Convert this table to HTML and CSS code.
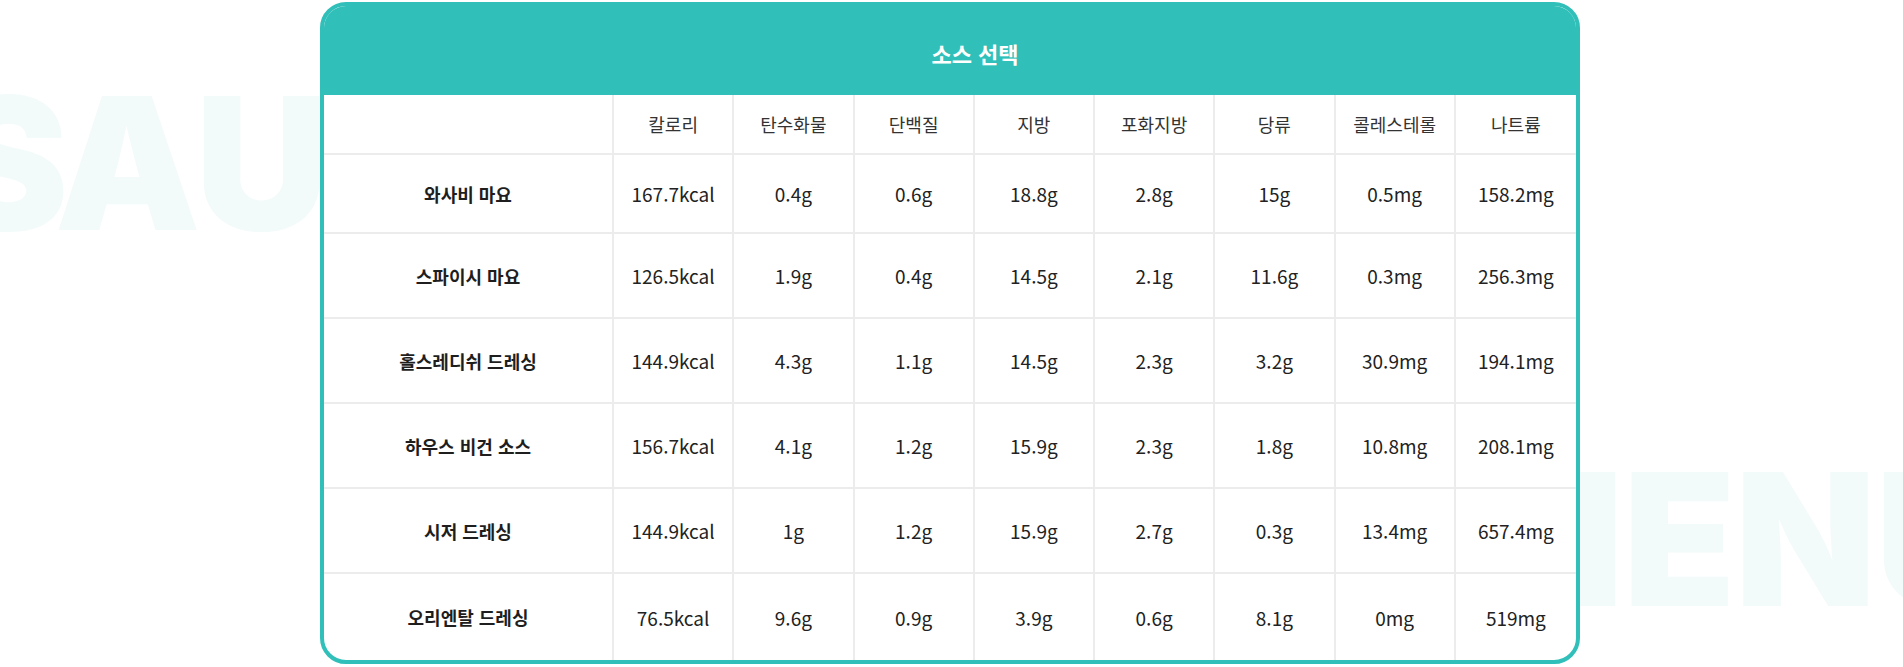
FILE: index.html
```html
<!DOCTYPE html>
<html lang="ko">
<head>
<meta charset="utf-8">
<title>소스 선택</title>
<link rel="stylesheet" href="styles.css">
</head>
<body>
<div class="page">
  <div class="bg-word bg-sauce"><span class="bg-first">S</span>AUCE</div>
  <div class="bg-word bg-menu">MENU</div>
  <section class="card">
    <h2 class="card-title">소스 선택</h2>
    <table class="nutri">
      <colgroup>
        <col class="col-name">
        <col><col><col><col><col><col><col><col>
      </colgroup>
      <thead>
        <tr>
          <th></th>
          <th>칼로리</th><th>탄수화물</th><th>단백질</th><th>지방</th><th>포화지방</th><th>당류</th><th>콜레스테롤</th><th>나트륨</th>
        </tr>
      </thead>
      <tbody>
        <tr class="r-first">
          <td class="name">와사비 마요</td>
          <td>167.7kcal</td><td>0.4g</td><td>0.6g</td><td>18.8g</td><td>2.8g</td><td>15g</td><td>0.5mg</td><td>158.2mg</td>
        </tr>
        <tr>
          <td class="name">스파이시 마요</td>
          <td>126.5kcal</td><td>1.9g</td><td>0.4g</td><td>14.5g</td><td>2.1g</td><td>11.6g</td><td>0.3mg</td><td>256.3mg</td>
        </tr>
        <tr>
          <td class="name">홀스레디쉬 드레싱</td>
          <td>144.9kcal</td><td>4.3g</td><td>1.1g</td><td>14.5g</td><td>2.3g</td><td>3.2g</td><td>30.9mg</td><td>194.1mg</td>
        </tr>
        <tr>
          <td class="name">하우스 비건 소스</td>
          <td>156.7kcal</td><td>4.1g</td><td>1.2g</td><td>15.9g</td><td>2.3g</td><td>1.8g</td><td>10.8mg</td><td>208.1mg</td>
        </tr>
        <tr>
          <td class="name">시저 드레싱</td>
          <td>144.9kcal</td><td>1g</td><td>1.2g</td><td>15.9g</td><td>2.7g</td><td>0.3g</td><td>13.4mg</td><td>657.4mg</td>
        </tr>
        <tr class="r-last">
          <td class="name">오리엔탈 드레싱</td>
          <td>76.5kcal</td><td>9.6g</td><td>0.9g</td><td>3.9g</td><td>0.6g</td><td>8.1g</td><td>0mg</td><td>519mg</td>
        </tr>
      </tbody>
    </table>
  </section>
</div>
</body>
</html>
```

FILE: styles.css
```css
* { box-sizing: border-box; }

html, body {
  margin: 0;
  padding: 0;
  background: #ffffff;
}

body {
  font-family: "Noto Sans CJK KR", "Noto Sans", sans-serif;
  color: #222222;
}

.page {
  position: relative;
  width: 1903px;
  height: 667px;
  overflow: hidden;
  display: flex;
  align-items: flex-start;
  padding: 2px 0 0 320px;
}

.bg-word {
  position: absolute;
  font-family: Inter, "Liberation Sans", sans-serif;
  font-weight: 900;
  font-size: 184px;
  line-height: 1;
  color: #f2fbfa;
  white-space: nowrap;
  z-index: 0;
}

.bg-sauce {
  left: -54px;
  top: 71px;
  letter-spacing: -2px;
}

.bg-first {
  letter-spacing: -14px;
}

.bg-menu {
  left: 1448px;
  top: 447px;
  letter-spacing: -1px;
}

.card {
  position: relative;
  z-index: 1;
  width: 1260px;
  height: 662px;
  border: 4px solid #30bfb9;
  border-radius: 26px;
  background: #ffffff;
  overflow: hidden;
  display: flex;
  flex-direction: column;
}

.card-title {
  margin: 0;
  height: 89px;
  flex: none;
  background: #30bfb9;
  color: #ffffff;
  font-size: 22px;
  font-weight: 700;
  display: flex;
  align-items: center;
  justify-content: center;
  padding: 4px 0 0 50px;
}

.nutri {
  width: 100%;
  table-layout: fixed;
  border-collapse: separate;
  border-spacing: 0;
}

.col-name { width: 290px; }

.nutri th,
.nutri td {
  padding: 0;
  text-align: center;
  vertical-align: middle;
  border-right: 2px solid #ececec;
  border-bottom: 2px solid #ececec;
  font-size: 18px;
}

.nutri th:last-child,
.nutri td:last-child { border-right: none; }

.nutri thead th {
  height: 60px;
  font-weight: 400;
  color: #333333;
}

.nutri tbody td {
  height: 85px;
  font-size: 19px;
  font-weight: 400;
  color: #222222;
}

.nutri tbody tr.r-first td { height: 79px; }

.nutri tbody tr.r-last td {
  height: 86px;
  border-bottom: none;
}

.nutri tbody td.name {
  font-size: 18px;
  font-weight: 700;
  color: #1e1e1e;
}
```
